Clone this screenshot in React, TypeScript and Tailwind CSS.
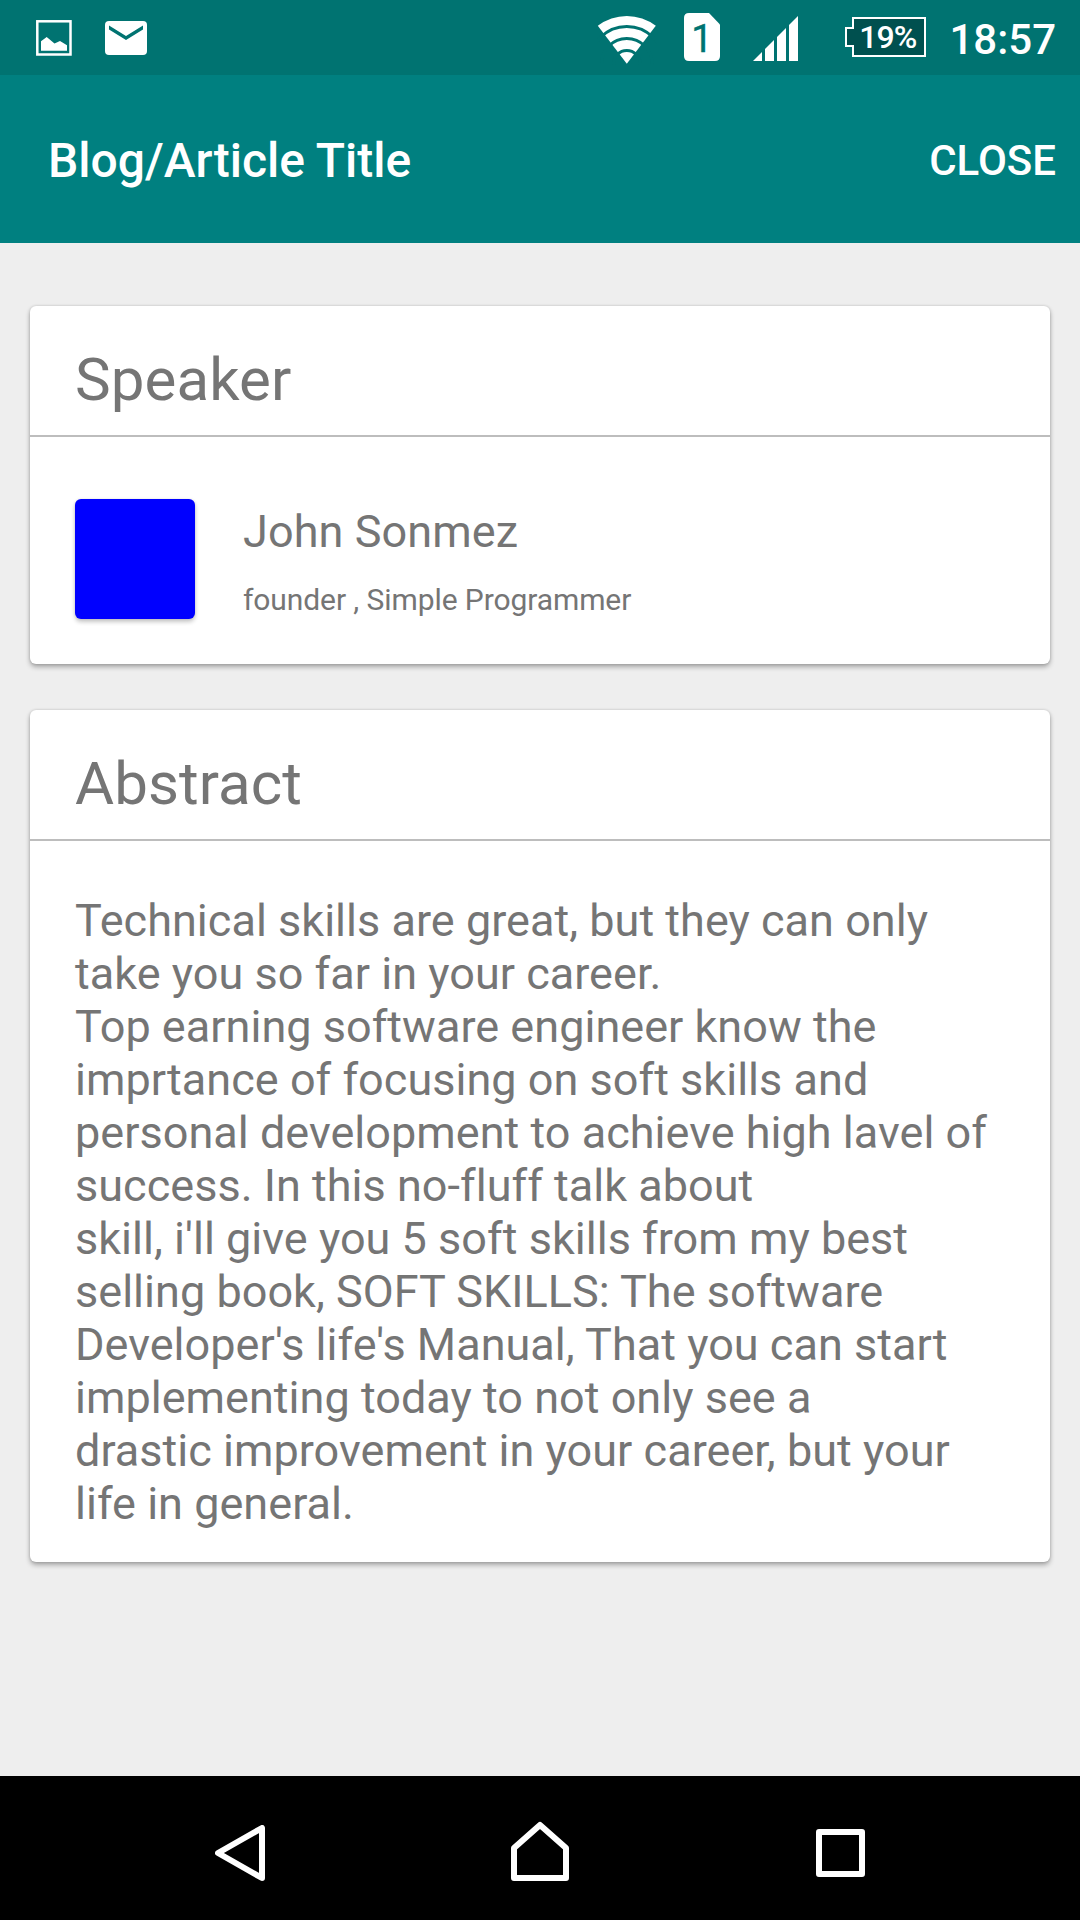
import React from "react";

const lines = [
  "Technical skills are great, but they can only",
  "take you so far in your career.",
  "Top earning software engineer know the",
  "imprtance of focusing on soft skills and",
  "personal development to achieve high lavel of",
  "success. In this no-fluff talk about",
  "skill, i'll give you 5 soft skills from my best",
  "selling book, SOFT SKILLS: The software",
  "Developer's life's Manual, That you can start",
  "implementing today to not only see a",
  "drastic improvement in your career, but your",
  "life in general.",
];

const cardClass =
  "mx-[30px] rounded-[6px] bg-white shadow-[0_3px_5px_rgba(0,0,0,0.3),0_0_3px_rgba(0,0,0,0.16)]";

function PictureIcon() {
  return (
    <svg className="ml-[36px] mt-[20px] shrink-0" width="36" height="36" viewBox="0 0 36 36">
      <rect x="1.3" y="1.3" width="33.2" height="33.2" fill="none" stroke="white" strokeWidth="2.5" />
      <path d="M5 21.3 L10.7 17 L18.5 23.5 L24 21 L31 25.2 V30.8 H5Z" fill="white" />
    </svg>
  );
}

function MailIcon() {
  return (
    <svg className="ml-[33px] mt-[21px] shrink-0" width="42" height="34" viewBox="0 0 42 34">
      <rect width="42" height="34" rx="4" fill="white" />
      <path d="M4 4.5 L21 15 L38 4.5 V8.5 L21 19 L4 8.5Z" fill="#007371" />
    </svg>
  );
}

function WifiIcon() {
  return (
    <svg className="ml-[450px] mt-[15px] shrink-0" width="60" height="50" viewBox="0 0 60 50">
      <path d="M29.8 48.8 L0.8 10.8 A47.8 47.8 0 0 1 58.8 10.8Z" fill="white" />
      <g fill="none" stroke="#007371" strokeWidth="3">
        <circle cx="29.8" cy="48.8" r="37.3" />
        <circle cx="29.8" cy="48.8" r="25.3" />
        <circle cx="29.8" cy="48.8" r="13.3" />
      </g>
    </svg>
  );
}

function SimIcon() {
  return (
    <svg className="ml-[27px] mt-[13px] shrink-0" width="36" height="48" viewBox="0 0 36 48">
      <path d="M5 0 H25 L36 11.5 V43 Q36 48 31 48 H5 Q0 48 0 43 V5 Q0 0 5 0Z" fill="white" />
      <text x="18" y="39" textAnchor="middle" fontSize="38" fill="#007371" stroke="#007371" strokeWidth="0.4">1</text>
    </svg>
  );
}

function SignalIcon() {
  return (
    <svg className="ml-[33px] mt-[16px] shrink-0" width="45" height="45" viewBox="0 0 45 45" fill="white">
      <path d="M0 45 L9 36 V45Z" />
      <path d="M12 45 V33 L21 24 V45Z" />
      <path d="M24 45 V21 L33 12 V45Z" />
      <path d="M36 45 V9 L45 0 V45Z" />
    </svg>
  );
}

function Battery() {
  return (
    <svg className="ml-[47px] mt-[17px] shrink-0" width="81" height="40" viewBox="0 0 81 40">
      <path d="M8 1 H80 V39 H8 V29 H1 V11 H8Z" fill="#00504f" stroke="white" strokeWidth="2" />
      <text x="42.8" y="31" textAnchor="middle" fontSize="32" fontWeight="500" letterSpacing="-0.9" fill="white">19%</text>
    </svg>
  );
}

function StatusBar() {
  return (
    <div className="flex h-[75px] items-start bg-[#007371] text-white">
      <PictureIcon />
      <MailIcon />
      <WifiIcon />
      <SimIcon />
      <SignalIcon />
      <Battery />
      <span className="ml-auto mr-[24px] mt-[15px] text-[42px] font-medium leading-[50px]">18:57</span>
    </div>
  );
}

function NavBar() {
  return (
    <nav className="flex h-[144px] items-start bg-black">
      <svg className="ml-[215px] mt-[49px]" width="50" height="56" viewBox="0 0 50 56">
        <path d="M3 28 L47 3 V53Z" fill="none" stroke="white" strokeWidth="6" strokeLinejoin="round" />
      </svg>
      <svg className="ml-[246px] mt-[45px]" width="58" height="60" viewBox="0 0 58 60">
        <path d="M29 4 L55 27 V57 H3 V27Z" fill="none" stroke="white" strokeWidth="6" strokeLinejoin="round" />
      </svg>
      <svg className="ml-[247px] mt-[53px]" width="49" height="48" viewBox="0 0 49 48">
        <rect x="3" y="3" width="43" height="42" fill="none" stroke="white" strokeWidth="6" strokeLinejoin="round" />
      </svg>
    </nav>
  );
}

function CardTitle({ children }: { children: string }) {
  return (
    <h2 className="h-[131px] border-b-2 border-[#bdbdbd] pl-[45px] pt-[39px] text-[60px] leading-[70px] tracking-[0.1px]">
      {children}
    </h2>
  );
}

export default function App() {
  return (
    <div className="flex h-[1920px] w-[1080px] flex-col bg-[#eeeeee] font-[Roboto,sans-serif] text-[#757575]">
      <StatusBar />
      <header className="flex h-[168px] items-center justify-between bg-[#008080] pl-[48px] pr-[24px] text-white">
        <h1 className="pt-[4px] text-[48px] font-medium">Blog/Article Title</h1>
        <span className="pt-[2px] text-[42px] font-medium">CLOSE</span>
      </header>
      <main className="flex-1 pt-[63px]">
        <section className={cardClass + " h-[358px]"}>
          <CardTitle>Speaker</CardTitle>
          <div className="flex pl-[45px] pt-[62px]">
            <div className="size-[120px] rounded-[6px] bg-[#0000ff] shadow-[0_3px_4px_rgba(0,0,0,0.22),0_0_3px_rgba(0,0,0,0.1)]" />
            <div className="ml-[48px]">
              <p className="mt-[6px] text-[45px] leading-[53px] tracking-[0.08px]">John Sonmez</p>
              <p className="mt-[24px] text-[30px] leading-[35px] tracking-[-0.09px]">founder , Simple Programmer</p>
            </div>
          </div>
        </section>
        <section className={cardClass + " mt-[46px] h-[852px]"}>
          <CardTitle>Abstract</CardTitle>
          <div className="pl-[45px] pt-[53px] text-[45px] leading-[53px] tracking-[0.025px]">
            {lines.map((l) => (
              <p key={l} className="whitespace-nowrap">{l}</p>
            ))}
          </div>
        </section>
      </main>
      <NavBar />
    </div>
  );
}
